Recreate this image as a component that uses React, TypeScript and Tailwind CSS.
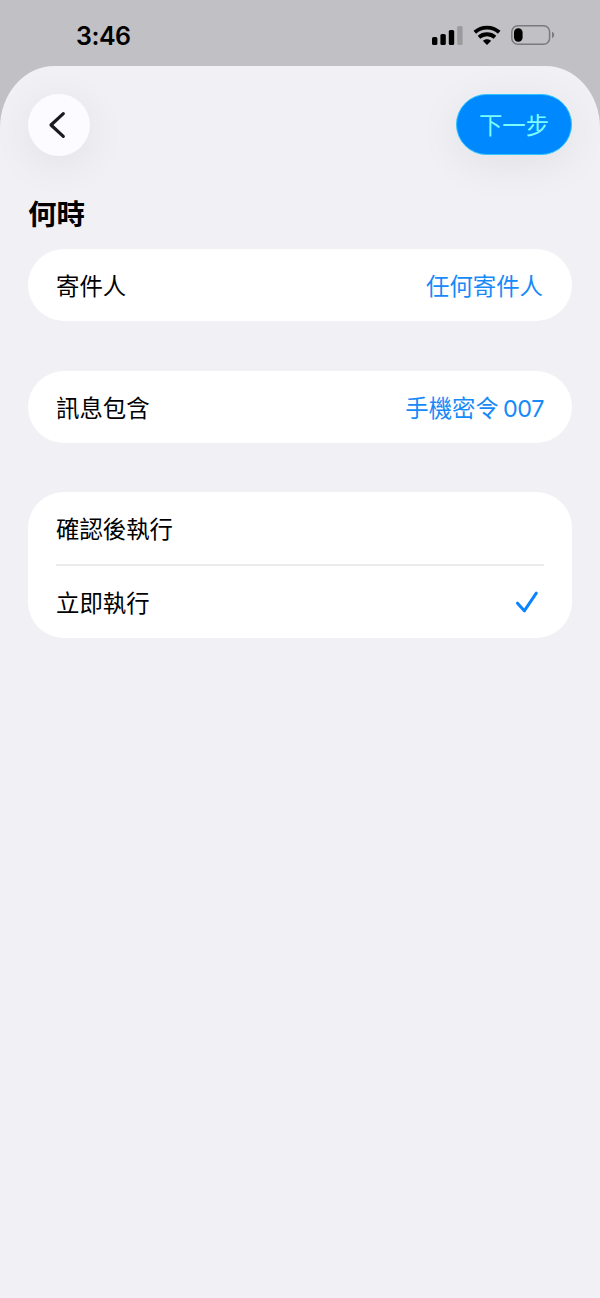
import type { ReactNode } from "react";

function StatusBar() {
  return (
    <div className="h-[66px] flex items-start justify-between pl-[76px] pr-[45px]">
      <span className="font-['Inter'] text-[25px] leading-[30px] font-semibold tracking-[-0.5px] mt-[21px]">3:46</span>
      <div className="flex items-center mt-[25px]">
        <svg width="31" height="20" viewBox="0 0 31 20">
          <rect x="0" y="12" width="5.4" height="8" rx="1.6" />
          <rect x="8.4" y="9" width="5.4" height="11" rx="1.6" />
          <rect x="16.8" y="5" width="5.4" height="15" rx="1.6" />
          <rect x="25.2" y="1" width="5.4" height="19" rx="1.6" fill="#9b9b9e" />
        </svg>
        <svg className="ml-[10px]" width="28" height="20" viewBox="0 0 28 20" fill="none" stroke="#000" strokeWidth="3.9">
          <path d="M1.8 7.3C8.7 1.1 19.3 1.1 26.2 7.3" />
          <path d="M6 12.2C10.5 8.2 17.5 8.2 22 12.2" />
          <path d="M14 20L9.8 15.8C12.1 13.7 15.9 13.7 18.2 15.8Z" fill="#000" stroke="none" />
        </svg>
        <svg className="ml-[10px]" width="44" height="20" viewBox="0 0 44 20">
          <rect x="0.8" y="0.8" width="37.8" height="18.4" rx="6" fill="none" stroke="#7b7b7f" strokeWidth="1.5" />
          <rect x="3" y="3.2" width="8.6" height="13.6" rx="4.2" />
          <path d="M41 6.8C43.9 8 43.9 12 41 13.2Z" fill="#7b7b7f" />
        </svg>
      </div>
    </div>
  );
}

function Row({ label, children }: { label: string; children?: ReactNode }) {
  return (
    <div className="h-[72px] flex items-center justify-between">
      <span className="pt-1">{label}</span>
      {children}
    </div>
  );
}

export default function App() {
  return (
    <div className="w-[600px] h-[1298px] flex flex-col overflow-hidden bg-[#c1c0c5] text-black font-['Inter','Noto_Sans_CJK_TC',sans-serif]">
      <StatusBar />
      <div className="flex-1 rounded-t-[54px_62px] bg-[#f1f0f5] px-7 pt-7">
        <div className="flex items-center justify-between">
          <button className="w-[62px] h-[62px] rounded-full bg-[#fcfbff] flex items-center justify-center shadow-[0_8px_44px_rgba(0,0,0,0.07)]">
            <svg className="-ml-[5px]" width="20" height="30" viewBox="0 0 20 30" fill="none" stroke="#1b1b1e" strokeWidth="3.2" strokeLinecap="round" strokeLinejoin="round">
              <path d="M16.3 3.6L4 15L16.3 26.4" />
            </svg>
          </button>
          <button className="w-[116px] h-[61px] -mt-px rounded-full bg-[#0088ff] border border-[#2fc6ff] text-[#7dfcff] text-[23.4px] font-normal pt-0.5 shadow-[0_8px_44px_rgba(0,0,0,0.07)]">
            下一步
          </button>
        </div>

        <h1 className="mt-[37px] h-[43px] text-[28.5px] leading-[44px] font-bold">何時</h1>

        <div className="mt-[13px] text-[23.4px] leading-[34px]">
          <div className="rounded-[36px] bg-white px-7">
            <Row label="寄件人">
              <span className="pt-1 pr-px text-[#168af8]">任何寄件人</span>
            </Row>
          </div>

          <div className="mt-[50px] rounded-[36px] bg-white px-7">
            <Row label="訊息包含">
              <span className="flex items-center gap-1 text-[#168af8]">
                <span className="pt-1">手機密令</span>
                <span className="pt-[3px] tracking-[-0.4px]">007</span>
              </span>
            </Row>
          </div>

          <div className="mt-[49px] rounded-[36px] bg-white px-7">
            <Row label="確認後執行" />
            <div className="h-[2px] bg-[#ebebed]" />
            <Row label="立即執行">
              <svg className="mr-1" width="26" height="26" viewBox="0 0 26 26" fill="none" stroke="#0a84ff" strokeWidth="3" strokeLinecap="round" strokeLinejoin="round">
                <path d="M3.5 14.2L10.3 21.8L22.3 4.2" />
              </svg>
            </Row>
          </div>
        </div>
      </div>
    </div>
  );
}
